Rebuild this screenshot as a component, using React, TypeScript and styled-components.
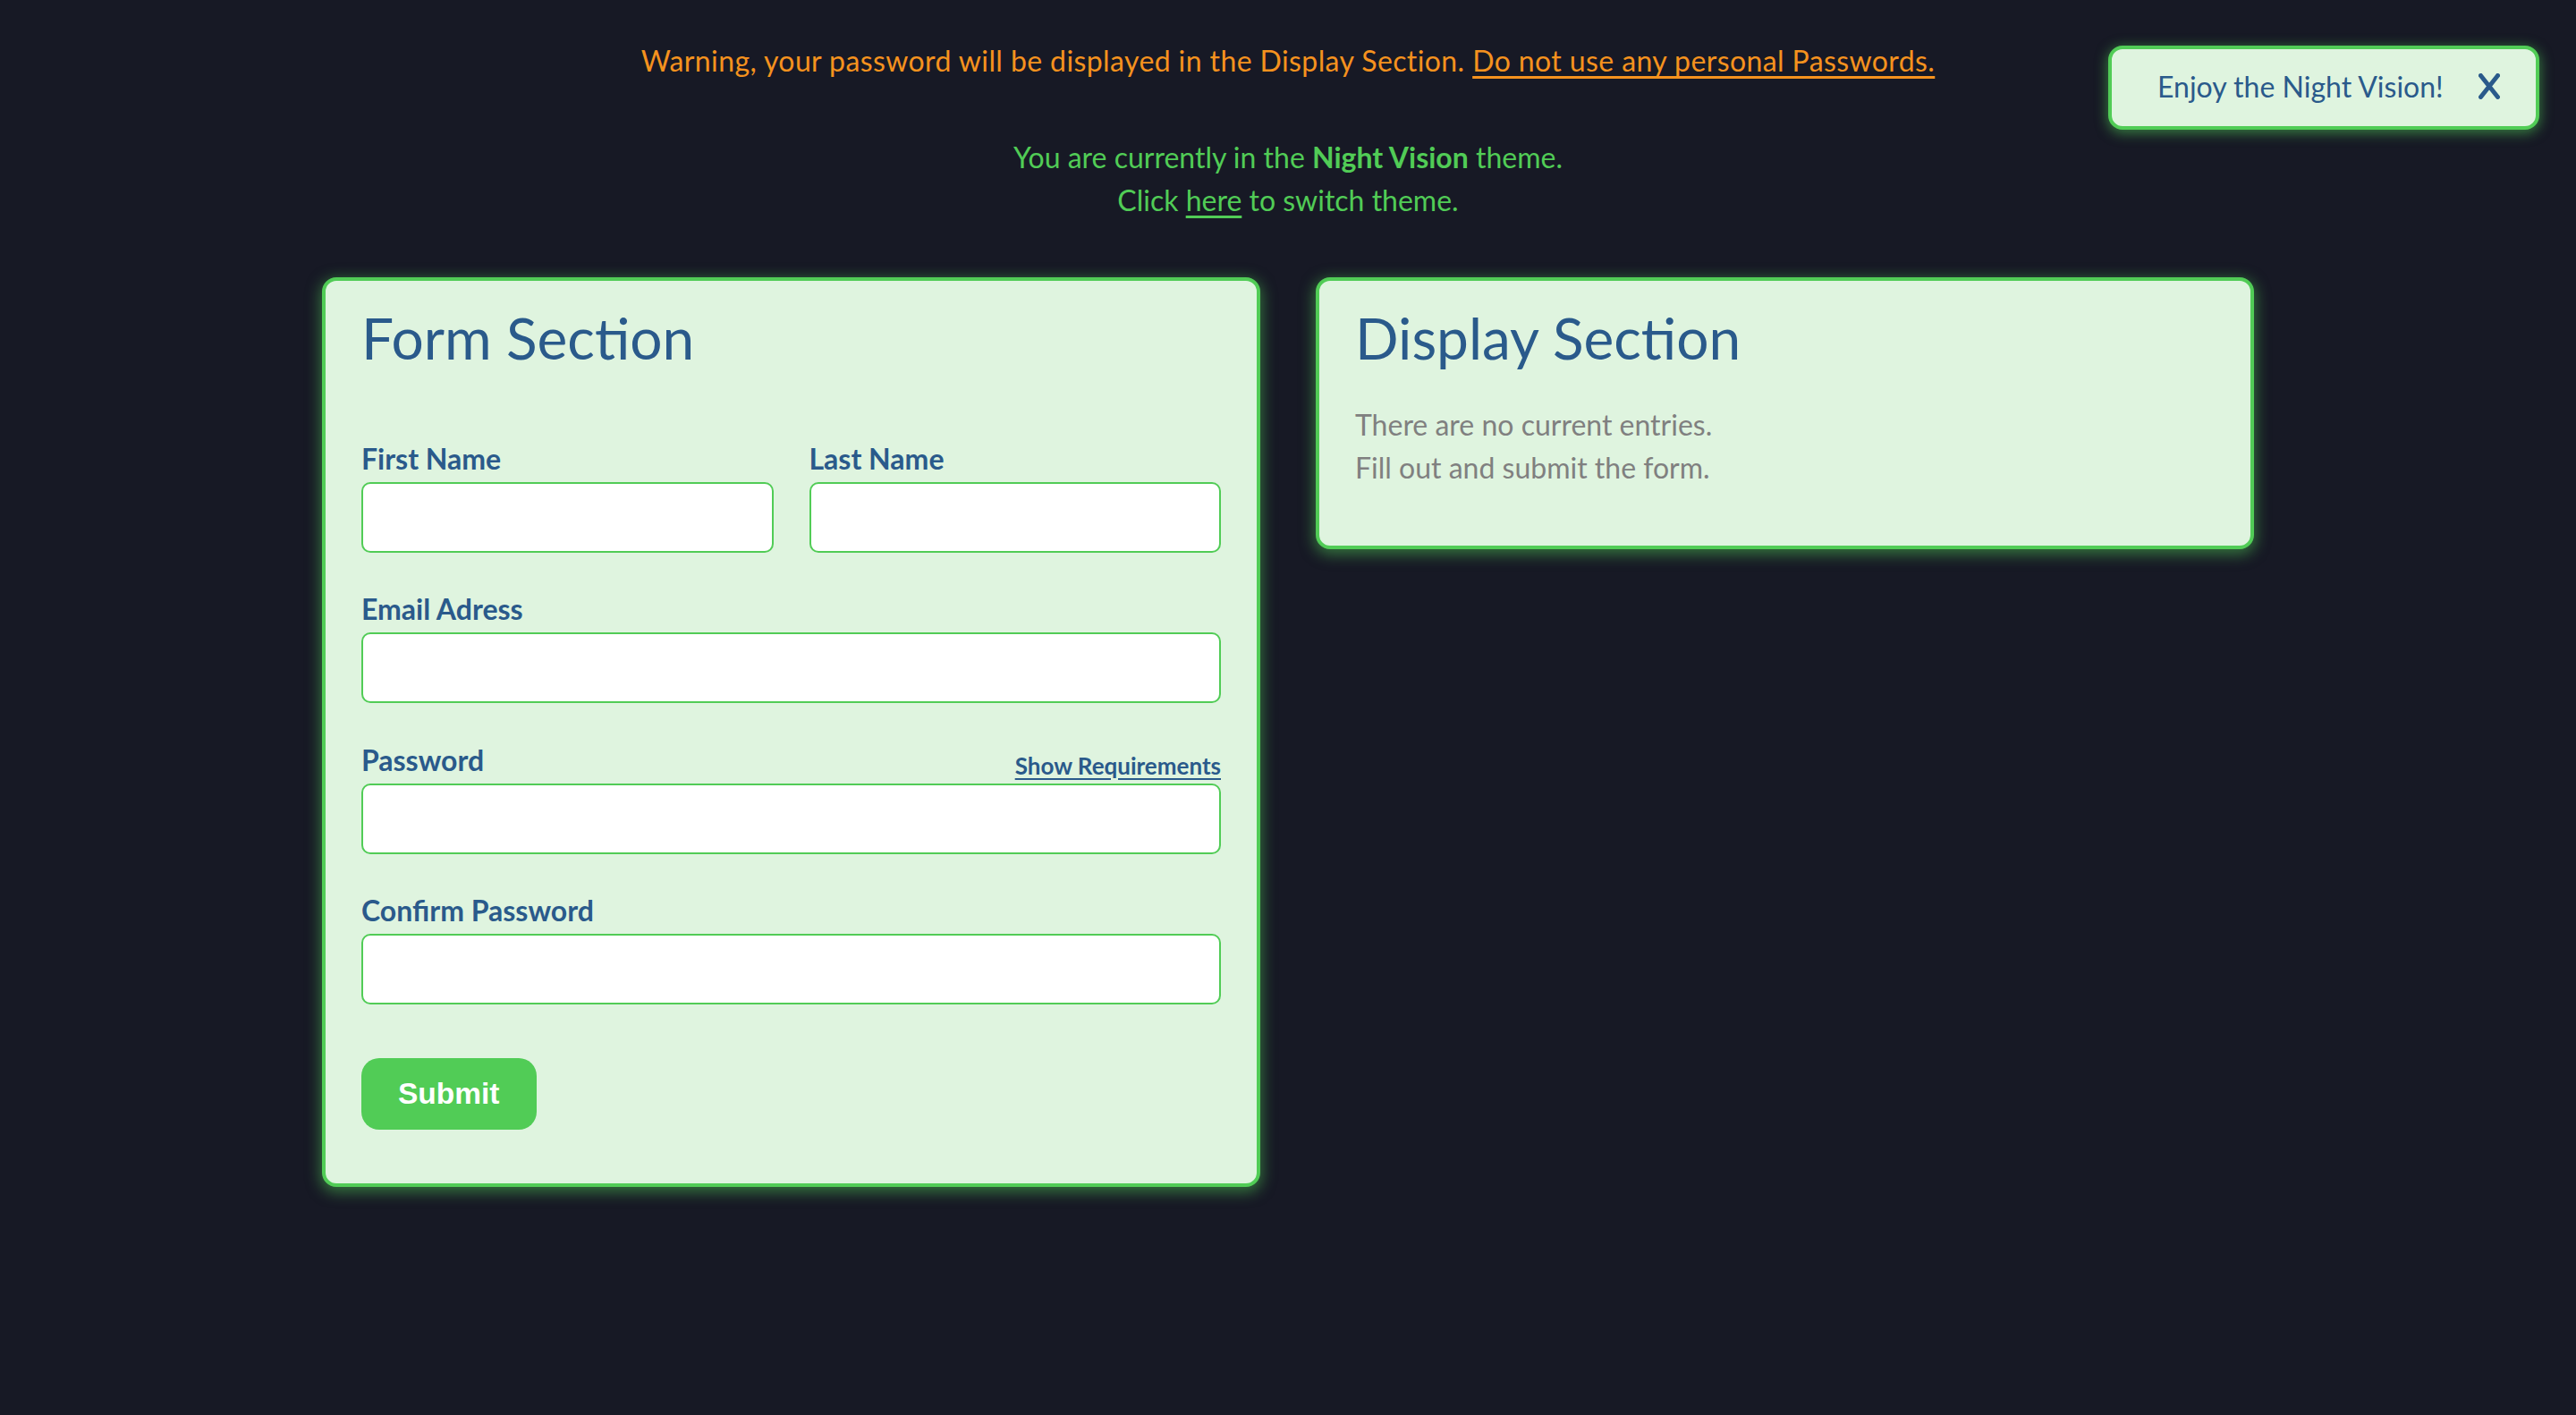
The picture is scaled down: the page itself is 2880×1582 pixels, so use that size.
import React from "react";
import styled, { createGlobalStyle } from "styled-components";

const GREEN = "#51cc56";
const BLUE = "#2a5a8b";
const CARD_BG = "#dff4df";
const PAGE_BG = "#171925";
const ORANGE = "#f5921e";

const GlobalStyle = createGlobalStyle`
  html, body {
    margin: 0;
    padding: 0;
    background: ${PAGE_BG};
  }
  body {
    font-family: Lato, "Noto Sans", sans-serif;
  }
  * { box-sizing: border-box; }
`;

const Page = styled.div`
  position: relative;
  min-height: 1582px;
  padding-top: 44px;
  display: flex;
  flex-direction: column;
  align-items: center;
  font-family: Lato, "Noto Sans", sans-serif;
`;

const Warning = styled.p`
  margin: 0;
  font-size: 32px;
  line-height: 48px;
  letter-spacing: 0.4px;
  color: ${ORANGE};
  text-align: center;
`;

const WarnLink = styled.a`
  color: ${ORANGE};
  text-decoration: underline;
  text-decoration-thickness: 3px;
  text-underline-offset: 5px;
  cursor: pointer;
`;

const ThemeNote = styled.p`
  margin: 60px 0 0;
  font-size: 32px;
  line-height: 48px;
  color: ${GREEN};
  text-align: center;
  strong {
    font-weight: 700;
  }
`;

const ThemeLink = styled.a`
  color: ${GREEN};
  text-decoration: underline;
  text-decoration-thickness: 3px;
  text-underline-offset: 5px;
  cursor: pointer;
`;

const Toast = styled.div`
  position: absolute;
  top: 51px;
  right: 41px;
  width: 482px;
  height: 94px;
  display: flex;
  align-items: center;
  justify-content: space-between;
  padding: 0 40px 3px 51px;
  background: ${CARD_BG};
  border: 4px solid ${GREEN};
  border-radius: 16px;
  box-shadow: 0 3px 14px 1px rgba(81, 204, 86, 0.55);
  color: ${BLUE};
  font-size: 32px;
  line-height: 48px;
`;

const CloseButton = styled.button`
  display: flex;
  padding: 0;
  margin: 0;
  border: none;
  background: none;
  cursor: pointer;
`;

const Sections = styled.main`
  margin-top: 62px;
  width: 2160px;
  display: grid;
  grid-template-columns: 1fr 1fr;
  gap: 62px;
  align-items: start;
`;

const Card = styled.section`
  background: ${CARD_BG};
  border: 4px solid ${GREEN};
  border-radius: 16px;
  box-shadow: 0 4px 16px 2px rgba(81, 204, 86, 0.5);
  padding: 24px 40px 60px;
`;

const CardTitle = styled.h2`
  margin: 0;
  font-size: 64px;
  line-height: 80px;
  font-weight: 400;
  color: ${BLUE};
`;

const Form = styled.form`
  margin-top: 75px;
  display: flex;
  flex-direction: column;
  gap: 43.4px;
`;

const NameRow = styled.div`
  display: grid;
  grid-template-columns: 1fr 1fr;
  gap: 40px;
`;

const Field = styled.div`
  display: flex;
  flex-direction: column;
`;

const LabelRow = styled.div`
  display: flex;
  justify-content: space-between;
  align-items: flex-end;
  margin-bottom: 6px;
`;

const Label = styled.label<{ $spaced?: boolean }>`
  display: block;
  font-size: 32px;
  line-height: 40px;
  font-weight: 700;
  color: ${BLUE};
  margin-bottom: ${(p) => (p.$spaced ? "6px" : "0")};
`;

const ShowReq = styled.button`
  padding: 0;
  margin: 0 0 1px;
  border: none;
  background: none;
  font-family: Lato, "Noto Sans", sans-serif;
  font-size: 26px;
  line-height: 26px;
  font-weight: 700;
  color: ${BLUE};
  text-decoration: underline;
  text-decoration-thickness: 2px;
  text-underline-offset: 4px;
  cursor: pointer;
`;

const Input = styled.input`
  display: block;
  width: 100%;
  height: 79px;
  padding: 0 20px;
  background: #ffffff;
  border: 2px solid ${GREEN};
  border-radius: 10px;
  font-family: Lato, "Noto Sans", sans-serif;
  font-size: 32px;
  color: ${BLUE};
  outline: none;
`;

const SubmitButton = styled.button`
  align-self: flex-start;
  margin-top: 16px;
  height: 80px;
  padding: 0 41px;
  border: none;
  border-radius: 20px;
  background: ${GREEN};
  color: #ffffff;
  font-family: "Liberation Sans", Arial, sans-serif;
  font-weight: 700;
  font-size: 33.5px;
  cursor: pointer;
`;

const EmptyText = styled.p`
  margin: 32.6px 0 3.4px;
  font-size: 32px;
  line-height: 48px;
  color: #808080;
`;

function CloseIcon() {
  return (
    <svg width="24" height="29" viewBox="0 0 24 29" fill="none">
      <path
        d="M2.5 2.5 L21.5 26.5 M21.5 2.5 L2.5 26.5"
        stroke={BLUE}
        strokeWidth="5"
        strokeLinecap="round"
      />
    </svg>
  );
}

export default function App() {
  return (
    <>
      <GlobalStyle />
      <Page>
        <Toast role="status">
          <span>Enjoy the Night Vision!</span>
          <CloseButton aria-label="Close">
            <CloseIcon />
          </CloseButton>
        </Toast>

        <Warning>
          Warning, your password will be displayed in the Display Section.{" "}
          <WarnLink>Do not use any personal Passwords.</WarnLink>
        </Warning>

        <ThemeNote>
          You are currently in the <strong>Night Vision</strong> theme.
          <br />
          Click <ThemeLink>here</ThemeLink> to switch theme.
        </ThemeNote>

        <Sections>
          <Card>
            <CardTitle>Form Section</CardTitle>
            <Form onSubmit={(e) => e.preventDefault()}>
              <NameRow>
                <Field>
                  <Label $spaced htmlFor="first">First Name</Label>
                  <Input id="first" type="text" />
                </Field>
                <Field>
                  <Label $spaced htmlFor="last">Last Name</Label>
                  <Input id="last" type="text" />
                </Field>
              </NameRow>
              <Field>
                <Label $spaced htmlFor="email">Email Adress</Label>
                <Input id="email" type="email" />
              </Field>
              <Field>
                <LabelRow>
                  <Label htmlFor="password">Password</Label>
                  <ShowReq type="button">Show Requirements</ShowReq>
                </LabelRow>
                <Input id="password" type="text" />
              </Field>
              <Field>
                <Label $spaced htmlFor="confirm">Confirm Password</Label>
                <Input id="confirm" type="text" />
              </Field>
              <SubmitButton type="submit">Submit</SubmitButton>
            </Form>
          </Card>

          <Card>
            <CardTitle>Display Section</CardTitle>
            <EmptyText>
              There are no current entries.
              <br />
              Fill out and submit the form.
            </EmptyText>
          </Card>
        </Sections>
      </Page>
    </>
  );
}
